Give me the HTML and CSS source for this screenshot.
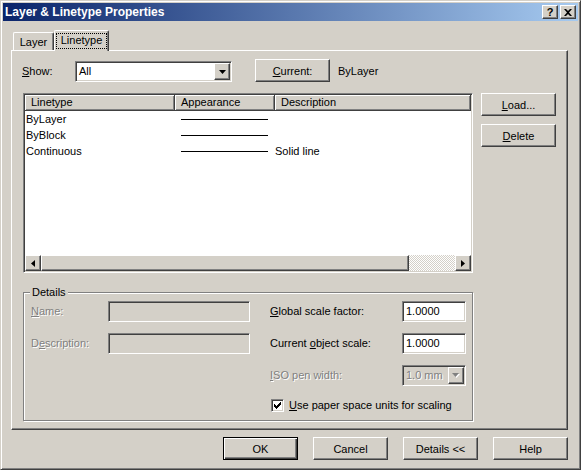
FILE: index.html
```html
<!DOCTYPE html>
<html lang="en">
<head>
    <meta charset="UTF-8">
    <title>Layer &amp; Linetype Properties</title>
    <link rel="stylesheet" href="styles.css">
</head>
<body>
    <div class="window">
        <div class="titlebar">
            <span class="title">Layer &amp; Linetype Properties</span>
            <div class="cap-buttons">
                <span class="cap-btn help">?</span>
                <span class="cap-btn">
                    <svg width="8" height="7" viewBox="0 0 8 7"><path d="M0 0h2l2 2 2-2h2l-3 3.5 3 3.5h-2l-2-2-2 2h-2l3-3.5z" fill="#000"/></svg>
                </span>
            </div>
        </div>

        <div class="client">
            <div class="tabs">
                <div class="tab">Layer</div>
                <div class="tab active"><span class="focus">Linetype</span></div>
            </div>

            <div class="panel">
                <div class="show-row">
                    <span class="show-label"><u>S</u>how:</span>
                    <div class="combo sunken">
                        <span class="combo-text">All</span>
                        <span class="drop raised">
                            <svg width="7" height="4" viewBox="0 0 7 4"><path d="M0 0h7l-3.5 4z" fill="#000"/></svg>
                        </span>
                    </div>
                    <button class="btn current-btn"><u>C</u>urrent:</button>
                    <span class="current-value">ByLayer</span>
                </div>

                <div class="list-row">
                    <div class="listview sunken">
                        <div class="lv-header">
                            <div class="hcell col-name">Linetype</div>
                            <div class="hcell col-look">Appearance</div>
                            <div class="hcell col-desc">Description</div>
                        </div>
                        <div class="lv-body">
                            <div class="lv-row">
                                <span class="col-name">ByLayer</span>
                                <span class="col-look"><i class="line"></i></span>
                                <span class="col-desc"></span>
                            </div>
                            <div class="lv-row">
                                <span class="col-name">ByBlock</span>
                                <span class="col-look"><i class="line"></i></span>
                                <span class="col-desc"></span>
                            </div>
                            <div class="lv-row">
                                <span class="col-name">Continuous</span>
                                <span class="col-look"><i class="line"></i></span>
                                <span class="col-desc">Solid line</span>
                            </div>
                        </div>
                        <div class="hscroll">
                            <span class="sb-btn raised">
                                <svg width="4" height="7" viewBox="0 0 4 7"><path d="M4 0v7l-4-3.5z" fill="#000"/></svg>
                            </span>
                            <span class="sb-thumb raised"></span>
                            <span class="sb-track"></span>
                            <span class="sb-btn raised">
                                <svg width="4" height="7" viewBox="0 0 4 7"><path d="M0 0v7l4-3.5z" fill="#000"/></svg>
                            </span>
                        </div>
                    </div>
                    <div class="side-buttons">
                        <button class="btn"><u>L</u>oad...</button>
                        <button class="btn"><u>D</u>elete</button>
                    </div>
                </div>

                <div class="group">
                    <span class="legend">Details</span>
                    <div class="details-grid">
                        <span class="lbl disabled"><u>N</u>ame:</span>
                        <span class="field sunken off"></span>
                        <span></span>
                        <span class="lbl"><u>G</u>lobal scale factor:</span>
                        <span class="field sunken">1.0000</span>

                        <span class="lbl disabled">D<u>e</u>scription:</span>
                        <span class="field sunken off"></span>
                        <span></span>
                        <span class="lbl">Current <u>o</u>bject scale:</span>
                        <span class="field sunken">1.0000</span>

                        <span class="lbl disabled pen-label"><u>I</u>SO pen width:</span>
                        <div class="combo small sunken off">
                            <span class="combo-text disabled">1.0 mm</span>
                            <span class="drop raised">
                                <svg width="8" height="5" viewBox="0 0 8 5"><path d="M1 1h7l-3.5 4z" fill="#fff"/><path d="M0 0h7l-3.5 4z" fill="#808080"/></svg>
                            </span>
                        </div>

                        <label class="check-row">
                            <span class="checkbox sunken">
                                <svg width="7" height="7" viewBox="0 0 7 7"><path d="M6 0h1v1h-1zM5 1h2v1h-2zM0 2h1v1h-1zM4 2h3v1h-3zM0 3h2v1h-2zM3 3h3v1h-3zM0 4h5v1h-5zM1 5h3v1h-3zM2 6h1v1h-1z" fill="#000"/></svg>
                            </span>
                            <span><u>U</u>se paper space units for scaling</span>
                        </label>
                    </div>
                </div>
            </div>

            <div class="dialog-buttons">
                <button class="btn default">OK</button>
                <button class="btn">Cancel</button>
                <button class="btn">Details &lt;&lt;</button>
                <button class="btn">Help</button>
            </div>
        </div>
    </div>
</body>
</html>
```

FILE: styles.css
```css
* {
    box-sizing: border-box;
}

body {
    margin: 0;
    background: #d4d0c8;
    font-family: 'Liberation Sans', Arial, sans-serif;
    font-size: 11px;
    color: #000;
}

/* 3D borders */
.raised {
    background: #d4d0c8;
    border: 1px solid;
    border-color: #fff #404040 #404040 #fff;
    box-shadow: inset -1px -1px #808080;
}

.sunken {
    border: 1px solid;
    border-color: #808080 #fff #fff #808080;
    box-shadow: inset 1px 1px #404040, inset -1px -1px #d4d0c8;
    padding: 1px;
}

.window {
    width: 581px;
    height: 470px;
    padding: 2px;
    border: 1px solid;
    border-color: #d4d0c8 #404040 #404040 #d4d0c8;
    box-shadow: inset 1px 1px #fff, inset -1px -1px #808080;
}

.titlebar {
    height: 18px;
    display: flex;
    align-items: center;
    padding: 0 2px 0 2px;
    background: linear-gradient(to right, #0a246a, #a6caf0);
}

.title {
    color: #fff;
    font-weight: bold;
    font-size: 12px;
}

.cap-buttons {
    margin-left: auto;
    display: flex;
    gap: 2px;
}

.cap-btn {
    width: 16px;
    height: 14px;
    display: flex;
    align-items: center;
    justify-content: center;
    background: #d4d0c8;
    border: 1px solid;
    border-color: #fff #404040 #404040 #fff;
    box-shadow: inset -1px -1px #808080;
}

.cap-btn.help {
    font-weight: bold;
    font-size: 11px;
    line-height: 12px;
}

.client {
    padding: 9px 10px 0 8px;
}

/* tabs */
.tabs {
    height: 20px;
    display: flex;
    align-items: flex-end;
    padding-left: 2px;
}

.tab {
    height: 18px;
    width: 41px;
    text-align: center;
    line-height: 18px;
    background: #d4d0c8;
    border: 1px solid;
    border-bottom: none;
    border-color: #fff #404040 #404040 #fff;
    border-radius: 2px 2px 0 0;
    box-shadow: inset -1px 0 #808080;
}

.tab.active {
    width: 55px;
    height: 21px;
    margin-bottom: -1px;
    padding: 2px 1px 0 1px;
    position: relative;
    z-index: 1;
}

.focus {
    display: block;
    height: 16px;
    line-height: 15px;
    outline: 1px dotted #000;
    outline-offset: -1px;
}

.panel {
    width: 557px;
    height: 380px;
    border: 1px solid;
    border-color: #fff #404040 #404040 #fff;
    box-shadow: inset -1px -1px #808080;
}

/* show row */
.show-row {
    display: flex;
    align-items: flex-start;
    margin: 8px 0 0 10px;
    height: 23px;
}

.show-label {
    width: 53px;
    line-height: 21px;
    margin-top: 2px;
}

.combo {
    width: 157px;
    height: 21px;
    margin-top: 2px;
    background: #fff;
    display: flex;
}

.combo-text {
    flex: 1;
    line-height: 17px;
    padding-left: 2px;
}

.drop {
    width: 16px;
    height: 17px;
    display: flex;
    align-items: center;
    justify-content: center;
}

.current-btn {
    margin-left: 23px;
}

.current-value {
    margin-left: 8px;
    line-height: 25px;
}

/* buttons */
.btn {
    width: 75px;
    height: 23px;
    padding: 0;
    font: inherit;
    color: #000;
    background: #d4d0c8;
    border: 1px solid;
    border-color: #fff #404040 #404040 #fff;
    box-shadow: inset -1px -1px #808080;
}

.btn.default {
    border-color: #000;
    box-shadow: inset 1px 1px #fff, inset -1px -1px #404040, inset -2px -2px #808080;
}

/* list */
.list-row {
    display: flex;
    margin: 11px 0 0 11px;
    gap: 8px;
}

.listview {
    width: 450px;
    height: 180px;
    background: #fff;
    display: flex;
    flex-direction: column;
}

.lv-header {
    height: 16px;
    display: flex;
    background: #d4d0c8;
}

.hcell {
    height: 16px;
    line-height: 14px;
    padding-left: 6px;
    border-right: 1px solid #404040;
    border-bottom: 1px solid #404040;
    box-shadow: inset 1px 1px #fff, inset -1px -1px #808080;
}

.col-name {
    width: 150px;
}

.col-look {
    width: 100px;
}

.col-desc {
    flex: 1;
}

.lv-body {
    flex: 1;
}

.lv-row {
    height: 16px;
    line-height: 16px;
    display: flex;
}

.lv-row .col-name {
    padding-left: 1px;
}

.lv-row .col-look {
    display: flex;
    align-items: center;
    padding-left: 6px;
}

.line {
    display: block;
    width: 87px;
    height: 1px;
    margin-top: 1px;
    background: #000;
}

.hscroll {
    height: 16px;
    display: flex;
}

.sb-btn {
    width: 16px;
    height: 16px;
    display: flex;
    align-items: center;
    justify-content: center;
}

.sb-thumb {
    width: 368px;
    height: 16px;
}

.sb-track {
    flex: 1;
    background: repeating-conic-gradient(#fff 0 25%, #d4d0c8 0 50%) 0 0 / 2px 2px;
}

.side-buttons {
    display: flex;
    flex-direction: column;
    gap: 8px;
}

/* details group */
.group {
    position: relative;
    width: 450px;
    height: 129px;
    margin: 19px 0 0 11px;
    padding: 8px 0 0 7px;
    border: 1px solid #808080;
    box-shadow: inset 1px 1px #fff, 1px 1px #fff;
}

.legend {
    position: absolute;
    top: -7px;
    left: 6px;
    padding: 0 2px;
    line-height: 13px;
    background: #d4d0c8;
}

.details-grid {
    display: grid;
    grid-template-columns: 77px 142px 20px 132px 64px;
    grid-template-rows: 21px 21px 21px 16px;
    row-gap: 11px;
    align-items: center;
}

.lbl {
    line-height: 21px;
}

.disabled {
    color: #808080;
    text-shadow: 1px 1px #fff;
}

.field {
    height: 21px;
    line-height: 17px;
    padding-left: 3px;
    background: #fff;
}

.field.off,
.combo.off {
    background: #d4d0c8;
}

.pen-label {
    grid-column: 4;
}

.combo.small {
    width: 64px;
    margin-top: 0;
}

.check-row {
    grid-column: 4 / 6;
    display: flex;
    align-items: center;
    gap: 5px;
    margin-left: 1px;
}

.checkbox {
    width: 13px;
    height: 13px;
    background: #fff;
    display: flex;
    align-items: center;
    justify-content: center;
}

.dialog-buttons {
    display: flex;
    justify-content: flex-end;
    gap: 15px;
    width: 557px;
    margin-top: 7px;
}
```
